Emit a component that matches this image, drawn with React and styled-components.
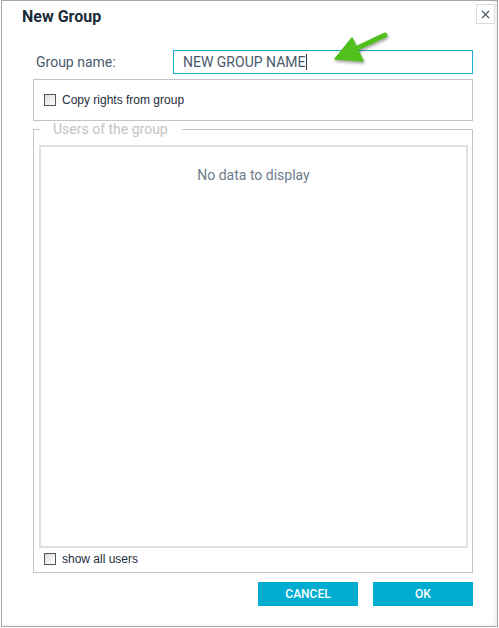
import React from "react";
import styled, { createGlobalStyle } from "styled-components";

const Global = createGlobalStyle`
  html, body { margin: 0; padding: 0; background: #fff; }
  body { font-family: Roboto, "Liberation Sans", sans-serif; }
  * { box-sizing: border-box; }
`;

const Window = styled.div`
  position: relative;
  margin-left: 1px;
  width: 497px;
  height: 627px;
  border: 1px solid #a8a8a8;
  background: #fff;
  box-shadow: inset -5px 0 5px -3px rgba(0, 0, 0, 0.07), inset 0 -3px 4px -3px rgba(0, 0, 0, 0.08);
  display: flex;
  flex-direction: column;
`;

const Header = styled.div`
  height: 49px;
  display: flex;
  justify-content: space-between;
  align-items: flex-start;
  padding: 3px 2px 0 20px;
`;

const Title = styled.div`
  padding-top: 3px;
  font-family: Roboto, sans-serif;
  font-weight: 700;
  font-size: 16px;
  line-height: 19px;
  color: #1b2c3b;
`;

const CloseButton = styled.div`
  width: 19px;
  height: 20px;
  border: 1px solid #dcdcdc;
  display: flex;
  align-items: center;
  justify-content: center;
  background: #fff;
`;

const Content = styled.div`
  padding: 0 24px 0 31px;
  display: flex;
  flex-direction: column;
`;

const FormRow = styled.div`
  display: flex;
  align-items: center;
  height: 24px;
`;

const Label = styled.div`
  width: 140px;
  padding-left: 3px;
  font-size: 14px;
  color: #4a5a6c;
`;

const TextInput = styled.div`
  flex: 1;
  height: 24px;
  border: 1px solid #1badd0;
  padding-left: 9px;
  display: flex;
  align-items: center;
  font-size: 14px;
  color: #4a5a6c;
`;

const Caret = styled.span`
  display: inline-block;
  width: 1px;
  height: 16px;
  background: #333;
  margin-left: 1px;
`;

const CopyBox = styled.div`
  margin-top: 5px;
  height: 42px;
  border: 1px solid #c4c4c4;
  padding-left: 10px;
  display: flex;
  align-items: center;
`;

const CheckRow = styled.label`
  display: flex;
  align-items: center;
  gap: 6px;
  font-family: "Liberation Sans", Arial, sans-serif;
  font-size: 12px;
  color: #1f2c3e;
`;

const Check = styled.span`
  width: 12px;
  height: 12px;
  border: 1px solid #555;
  background: linear-gradient(135deg, #dedede, #ffffff);
  display: inline-block;
`;

const Fieldset = styled.fieldset`
  margin: 0;
  padding: 8px 4px 2px 5px;
  border: 1px solid #c4c4c4;
  min-width: 0;
`;

const Legend = styled.legend`
  margin-left: 1px;
  padding: 0 14px 0 13px;
  font-size: 14px;
  line-height: 16px;
  color: #c4c4c4;
`;

const Grid = styled.div`
  height: 403px;
  border: 2px solid #dce1e4;
  padding-top: 20px;
  text-align: center;
  font-size: 14px;
  line-height: 16px;
  color: #6c7b8a;
`;

const ShowRow = styled.div`
  height: 22px;
  padding-left: 5px;
  display: flex;
  align-items: center;
`;

const Buttons = styled.div`
  margin-top: 9px;
  display: flex;
  justify-content: flex-end;
  gap: 15px;
`;

const Button = styled.button`
  width: ${(p) => p.$w}px;
  height: 24px;
  border: none;
  background: #00acd0;
  color: #fff;
  font-family: Roboto, sans-serif;
  font-weight: 500;
  font-size: 12px;
  padding: 0;
  cursor: pointer;
`;

const Arrow = styled.svg`
  position: absolute;
  left: 325px;
  top: 24px;
  overflow: visible;
  filter: drop-shadow(1px 2px 1.5px rgba(0, 0, 0, 0.35));
`;

export default function App() {
  return (
    <>
      <Global />
      <Window>
        <Header>
          <Title>New Group</Title>
          <CloseButton>
            <svg width="9" height="9" viewBox="0 0 9 9">
              <path d="M1 1 L8 8 M8 1 L1 8" stroke="#4a5560" strokeWidth="1.1" />
            </svg>
          </CloseButton>
        </Header>
        <Content>
          <FormRow>
            <Label>Group name:</Label>
            <TextInput>
              NEW GROUP NAME<Caret />
            </TextInput>
          </FormRow>
          <CopyBox>
            <CheckRow>
              <Check />
              Copy rights from group
            </CheckRow>
          </CopyBox>
          <Fieldset>
            <Legend>Users of the group</Legend>
            <Grid>No data to display</Grid>
            <ShowRow>
              <CheckRow>
                <Check />
                show all users
              </CheckRow>
            </ShowRow>
          </Fieldset>
          <Buttons>
            <Button $w={100}>CANCEL</Button>
            <Button $w={100}>OK</Button>
          </Buttons>
        </Content>
        <Arrow width="70" height="45" viewBox="0 0 70 45">
          <path d="M58 10 L22 27" stroke="#52c01c" strokeWidth="5" strokeLinecap="round" />
          <path d="M8 34 L25 13 L36 36 Z" fill="#52c01c" stroke="#52c01c" strokeWidth="1.5" strokeLinejoin="round" />
        </Arrow>
      </Window>
    </>
  );
}
